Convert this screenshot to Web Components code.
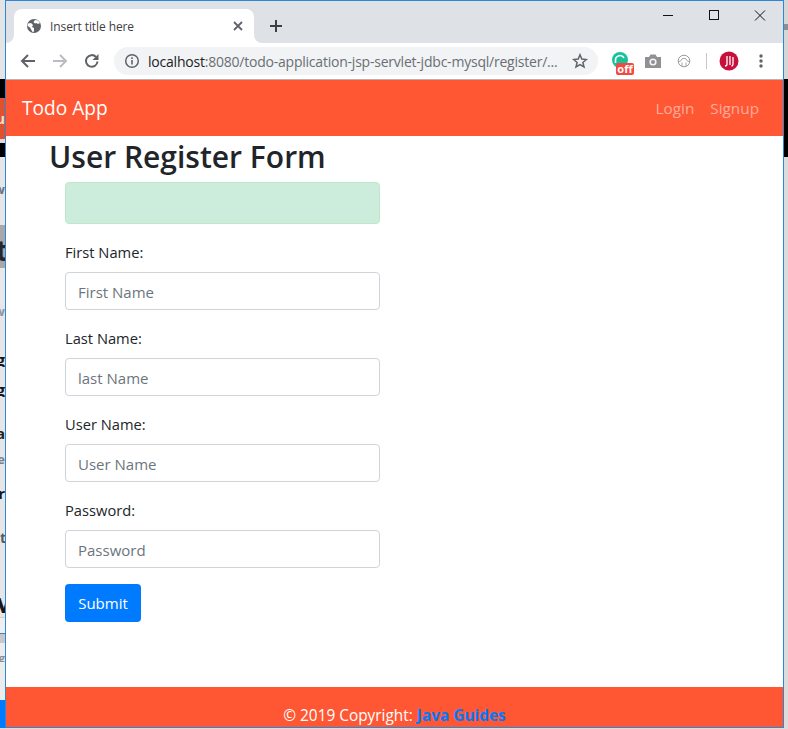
<!DOCTYPE html>
<html lang="en">
<head>
<meta charset="utf-8">
<title>Insert title here</title>
<style>
   html, body { margin: 0; padding: 0; height: 100%; overflow: hidden; background: #dcdcdc; }
   body { font-family: "Open Sans", "Noto Sans", sans-serif; }
   #desk { display: flex; flex-direction: column; width: 788px; height: 729px; }
   #row { display: flex; height: 728px; }
</style>
</head>
<body>
<div id="desk">
   <div id="row">
      <desk-strip side="left"></desk-strip>
      <browser-window>
         <tab-strip title-text="Insert title here"></tab-strip>
         <url-bar host="localhost" rest=":8080/todo-application-jsp-servlet-jdbc-mysql/register/..."></url-bar>
         <todo-navbar brand="Todo App"></todo-navbar>
         <register-page></register-page>
         <todo-footer></todo-footer>
      </browser-window>
      <desk-strip side="right"></desk-strip>
   </div>
</div>

<script>
// [height, background, letter, letter colour, font size, shift]
const STRIPS = {
   left: [
      [79, "#e4e4e4"], [19, "#000"], [41, "#e2512d", "u", "#f4e3c8", 14], [4, "#ddd"], [14, "#000"],
      [26, "#e6e6e6"], [12, "#e6e6e6", "w", "#6b7380", 13], [30, "#e6e6e6"],
      [13, "#a8a8a8"], [24, "#a8a8a8", "t", "#26262c", 28, -3], [6, "#a8a8a8"],
      [37, "#e8e8e8"], [12, "#e6e6e6", "w", "#8f95a0", 13], [36, "#e6e6e6"],
      [14, "#e6e6e6", "g", "#17171b", 16], [16, "#e6e6e6"], [14, "#e6e6e6", "g", "#17171b", 16],
      [30, "#e6e6e6"], [12, "#e6e6e6", "a", "#222", 15], [12, "#e6e6e6"],
      [16, "#e6e6e6", "e", "#7a7f8a", 13], [20, "#e6e6e6"], [12, "#e6e6e6", "r", "#17171b", 15],
      [32, "#e6e6e6"], [13, "#e6e6e6", "t", "#555a63", 14, -1], [49, "#e6e6e6"],
      [20, "#e6e6e6", "y", "#15151a", 26, -6], [4, "#e6e6e6"], [1, "#cfcfcf"], [15, "#efefef"], [1, "#2f86d6"],
      [9, "#c8c8c8"], [9, "#ececec"], [10, "#ececec", "g", "#8f8f8f", 11], [38, "#ececec"], [31, "#007bff"]
   ],
   right: [
      [24, "#d6d6d6"], [6, "#8a8f96"], [49, "#d6d6d6"], [78, "#000"], [571, "#dcdcdc"]
   ]
};

class DeskStrip extends HTMLElement {
   constructor() {
      super();
      this.shadow = this.attachShadow({ mode: "open" });
      const side = this.getAttribute("side");
      const html = STRIPS[side].map(([h, bg, ch, col, size, shift]) =>
         `<div style="height:${h}px;background:${bg};color:${col || "#000"};font-size:${size || 12}px"><span style="margin-right:${shift || 0}px">${ch || ""}</span></div>`
      ).join("");
      this.shadow.innerHTML = `<style>
         :host { display: block; flex: none; width: ${side == "left" ? 5 : 4}px; height: 100%; overflow: hidden; }
         div { display: flex; justify-content: flex-end; align-items: center; overflow: hidden; white-space: nowrap;
            font-family: "Open Sans", sans-serif; font-weight: 700; line-height: 1; }
      </style>${html}`;
   }
}

class BrowserWindow extends HTMLElement {
   constructor() {
      super();
      this.attachShadow({ mode: "open" }).innerHTML = `<style>
         :host { display: flex; flex-direction: column; flex: none; width: 777px; height: 726px; background: #fff;
            border: 1px solid #2f86d6; overflow: hidden; }
      </style><slot></slot>`;
   }
}

class TabStrip extends HTMLElement {
   constructor() {
      super();
      const title = this.getAttribute("title-text");
      this.attachShadow({ mode: "open" }).innerHTML = `<style>
         :host { display: flex; flex: none; height: 42px; background: #dee1e6; align-items: flex-end; padding-left: 8px; position: relative; }
         .tab { display: flex; align-items: center; width: 240px; height: 34px; box-sizing: border-box; padding: 0 8px 0 12px;
            background: #fff; border-radius: 8px 8px 0 0; position: relative; }
         .tab::before, .tab::after { content: ""; position: absolute; bottom: 0; width: 8px; height: 8px; background: #fff; }
         .tab::before { left: -8px; clip-path: path("M0 8 A8 8 0 0 0 8 0 V8 Z"); }
         .tab::after { right: -8px; clip-path: path("M8 8 A8 8 0 0 1 0 0 V8 Z"); }
         .title { flex: 1; margin-left: 8px; font: 12px "Open Sans", sans-serif; letter-spacing: -.1px; color: #3c4043; }
         svg { display: block; flex: none; }
         .plus { margin: 0 0 10px 15px; }
         .controls { margin-left: auto; display: flex; align-self: flex-start; gap: 30px; padding: 0 15px 0 0; }
         .controls svg { width: 16px; height: 20px; }
      </style>
      <div class="tab">
         <svg width="16" height="16" viewBox="0 0 16 16"><circle cx="8" cy="8" r="7" fill="#5f6368"/><path d="M2 5.500 5 5l2 2-1 2 2 1v3.500L6.500 14 4 9.500 1.500 8zM9 2l3 .5 2 2.500-2 1-1.500-1-1.500.5L7.500 4z" fill="#fff"/></svg>
         <span class="title">${title}</span>
         <svg width="16" height="16" viewBox="0 0 16 16"><path d="M4 4l8 8M12 4l-8 8" stroke="#5f6368" stroke-width="1.800" fill="none"/></svg>
      </div>
      <svg class="plus" width="14" height="14" viewBox="0 0 14 14"><path d="M7 1v12M1 7h12" stroke="#3c4043" stroke-width="2" fill="none"/></svg>
      <div class="controls">
         <svg viewBox="0 0 16 20"><path d="M3 14.500h10" stroke="#111" fill="none"/></svg>
         <svg viewBox="0 0 16 20"><rect x="3.500" y="9.500" width="9" height="9" stroke="#111" fill="none"/></svg>
         <svg viewBox="0 0 16 20"><path d="M3 9.500l10 10M13 9.500l-10 10" stroke="#111" fill="none"/></svg>
      </div>`;
   }
}

class UrlBar extends HTMLElement {
   constructor() {
      super();
      const host = this.getAttribute("host");
      const rest = this.getAttribute("rest");
      this.attachShadow({ mode: "open" }).innerHTML = `<style>
         :host { display: flex; flex: none; height: 37px; box-sizing: border-box; align-items: center; background: #fff;
            border-bottom: 1px solid #b4b4b4; padding-left: 13px; }
         svg { display: block; flex: none; }
         .nav { display: flex; gap: 14px; margin-right: 13px; }
         .box { display: flex; align-items: center; width: 484px; height: 28px; box-sizing: border-box; padding: 0 10px 0 10px;
            border-radius: 14px; background: #f1f3f4; }
         .url { flex: 1; margin-left: 8px; font: 14px "Open Sans", sans-serif; letter-spacing: -.22px; color: #6a6f75; white-space: nowrap; overflow: hidden; }
         .url b { font-weight: 400; color: #202124; }
         .ext { display: flex; align-items: center; margin-left: 14px; gap: 14px; }
         .off { position: absolute; left: 4px; top: 11px; width: 18px; background: #f04a43; color: #fff; border-radius: 2px; text-align: center;
            font: 700 11px/12px "Open Sans", sans-serif; }
         .gram { position: relative; width: 18px; height: 18px; }
         .sep { width: 1px; height: 16px; background: #c8c8c8; margin-right: -2px; }
      </style>
      <div class="nav">
         <svg width="18" height="18" viewBox="0 0 18 18"><path d="M16 9H3.500M9 3 3 9l6 6" stroke="#5f6368" stroke-width="2" fill="none"/></svg>
         <svg width="18" height="18" viewBox="0 0 18 18"><path d="M2 9h12.500M9 3l6 6-6 6" stroke="#b9bcc1" stroke-width="2" fill="none"/></svg>
         <svg width="18" height="18" viewBox="0 0 18 18"><path d="M14.500 9.500A5.800 5.800 0 1 1 13 5" stroke="#5f6368" stroke-width="2" fill="none"/><path d="M15.500 2v6h-6z" fill="#5f6368"/></svg>
      </div>
      <div class="box">
         <svg width="16" height="16" viewBox="0 0 16 16"><circle cx="8" cy="8" r="6.300" stroke="#5f6368" stroke-width="1.500" fill="none"/><path d="M8 7v4.500M8 4.300v1.600" stroke="#5f6368" stroke-width="1.600"/></svg>
         <span class="url"><b>${host}</b>${rest}</span>
         <svg width="16" height="16" viewBox="0 0 16 16"><path d="M8 1.800l1.800 4.300 4.600.4-3.500 3 1.100 4.500L8 11.600 4 14l1.100-4.500-3.500-3 4.600-.4z" stroke="#5f6368" stroke-width="1.500" fill="none"/></svg>
      </div>
      <div class="ext">
         <div class="gram">
            <svg width="18" height="18" viewBox="0 0 18 18"><circle cx="8" cy="8" r="8" fill="#15c39a"/><path d="M3.500 11V8a4.500 4.500 0 0 1 8.500-2" stroke="#fff" stroke-width="1.600" fill="none"/></svg>
            <span class="off">off</span>
         </div>
         <svg width="18" height="16" viewBox="0 0 18 16"><path d="M1 4h4l1.500-2.500h5L13 4h4v11H1z" fill="#8f9194"/><circle cx="9" cy="9" r="3.600" fill="#f4f4f4"/><circle cx="9" cy="9" r="2" fill="#8f9194"/></svg>
         <svg width="16" height="16" viewBox="0 0 16 16"><circle cx="8" cy="8" r="5.800" stroke="#9a9a9a" fill="none"/><path d="M2.500 8.800q3-.3 3.500-3M13.500 8.800q-3-.3-3.500-3M6 5.800q2-1 4 0M6 9.500v3.800M10 9.500v3.800" stroke="#a8a8a8" fill="none"/></svg>
         <span class="sep"></span>
         <svg width="20" height="20" viewBox="0 0 20 20"><circle cx="10" cy="10" r="9.500" fill="#c8103c"/><path d="M8 5v8q0 2-2 2M11 5v9M14 6v7q0 2-1.500 2" stroke="#fff" stroke-width="1.300" fill="none"/></svg>
         <svg width="4" height="16" viewBox="0 0 4 16" style="margin-left:6px"><circle cx="2" cy="3" r="1.700" fill="#5f6368"/><circle cx="2" cy="8" r="1.700" fill="#5f6368"/><circle cx="2" cy="13" r="1.700" fill="#5f6368"/></svg>
      </div>`;
   }
}

class TodoNavbar extends HTMLElement {
   constructor() {
      super();
      this.attachShadow({ mode: "open" }).innerHTML = `<style>
         :host { display: flex; flex: none; height: 56px; align-items: center; justify-content: space-between;
            padding: 0 16px; background: #ff5733; font-family: "Open Sans", sans-serif; }
         .brand { font-size: 19.100px; color: #fff; }
         nav { display: flex; }
         a { padding: 0 8px; font-size: 15.300px; color: rgba(255, 255, 255, .5); }
      </style>
      <span class="brand">${this.getAttribute("brand")}</span>
      <nav><a>Login</a><a>Signup</a></nav>`;
   }
}

class FormField extends HTMLElement {
   constructor() {
      super();
      this.attachShadow({ mode: "open" }).innerHTML = `<style>
         :host { display: block; margin-bottom: 16px; }
         label { display: block; margin-bottom: 8px; font-size: 14.700px; line-height: 24px; color: #212529; }
         .input { height: 38px; box-sizing: border-box; padding: 1px 12px 0; display: flex; align-items: center;
            border: 1px solid #ced4da; border-radius: 4px; background: #fff; font-size: 15px; color: #6c757d; }
      </style>
      <label>${this.getAttribute("label")}</label>
      <div class="input">${this.getAttribute("hint")}</div>`;
   }
}

class RegisterPage extends HTMLElement {
   constructor() {
      super();
      this.attachShadow({ mode: "open" }).innerHTML = `<style>
         :host { display: block; flex: 1; padding: 2px 0 0 44px; font-family: "Open Sans", sans-serif; }
         h2 { margin: 0 0 6px -1px; font-size: 30px; line-height: 38px; font-weight: 600; color: #212529; white-space: nowrap; }
         .col { width: 315px; margin-left: 15px; }
         .alert { height: 42px; box-sizing: border-box; margin-bottom: 16px; border: 1px solid #c3e6cb; border-radius: 4px; background: #cdeddc; }
         button { display: block; width: 76px; height: 38px; padding: 0; border: 0; border-radius: 4px; background: #007bff; color: #fff;
            font: 15px "Open Sans", sans-serif; }
      </style>
      <h2>User Register Form</h2>
      <div class="col">
         <div class="alert"></div>
         <form-field label="First Name:" hint="First Name"></form-field>
         <form-field label="Last Name:" hint="last Name"></form-field>
         <form-field label="User Name:" hint="User Name"></form-field>
         <form-field label="Password:" hint="Password"></form-field>
         <button type="button">Submit</button>
      </div>`;
   }
}

class TodoFooter extends HTMLElement {
   constructor() {
      super();
      this.attachShadow({ mode: "open" }).innerHTML = `<style>
         :host { display: block; flex: none; height: 40px; box-sizing: border-box; padding-top: 19px; background: #ff5733;
            text-align: center; font: 15.400px/20px "Open Sans", sans-serif; color: #fff; overflow: hidden; }
         b { color: #007bff; }
      </style>© 2019 Copyright: <b>Java Guides</b>`;
   }
}

customElements.define("desk-strip", DeskStrip);
customElements.define("browser-window", BrowserWindow);
customElements.define("tab-strip", TabStrip);
customElements.define("url-bar", UrlBar);
customElements.define("todo-navbar", TodoNavbar);
customElements.define("form-field", FormField);
customElements.define("register-page", RegisterPage);
customElements.define("todo-footer", TodoFooter);
</script>
</body>
</html>
